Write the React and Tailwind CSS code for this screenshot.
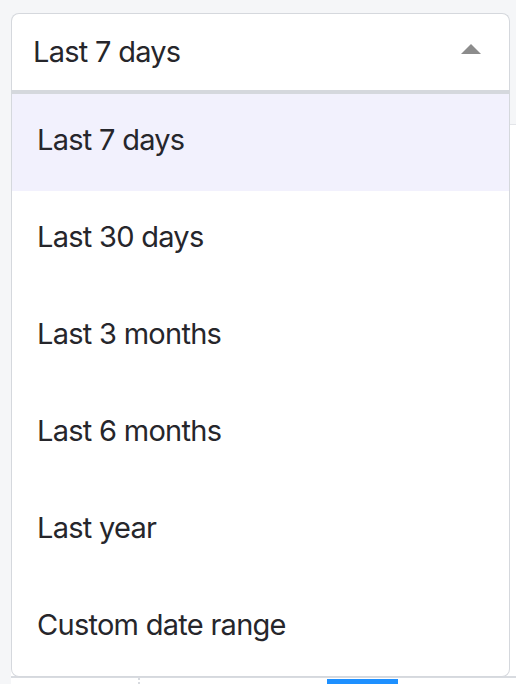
const options = [
  'Last 7 days',
  'Last 30 days',
  'Last 3 months',
  'Last 6 months',
  'Last year',
  'Custom date range',
]

export default function App() {
  const selected = 'Last 7 days'

  return (
    <div
      className="flex h-[684px] w-[516px] flex-col overflow-hidden bg-[#f5f6f8] text-[#26262b]"
      style={{ fontFamily: 'Inter, "Noto Sans", sans-serif' }}
    >
      {/* select */}
      <div className="relative z-10 ml-[11px] mt-[13px] w-[499px]">
        <button className="flex h-[78px] w-full items-center justify-between rounded-t-lg border-x-[1.5px] border-t-[1.5px] border-[#d5d8dd] bg-white pl-[21px] pr-[28px] text-[29px] tracking-[-0.025em]">
          <span className="pb-[2px]">{selected}</span>
          <svg width="20" height="10" viewBox="0 0 20 10" className="mb-[8px]">
            <polygon points="10,0 20,10 0,10" fill="#8c8c8c" />
          </svg>
        </button>

        {/* menu */}
        <ul className="absolute left-0 top-[77px] w-full overflow-hidden rounded-b-lg border-x-[1.5px] border-b-[1.5px] border-t-[4px] border-[#d5d8dd] bg-white">
          {options.map((o) => (
            <li
              key={o}
              className={`flex h-[97px] items-center pb-[6px] pl-[25px] text-[29px] tracking-[-0.025em] ${
                o === selected ? 'bg-[#f2f1fd]' : ''
              }`}
            >
              {o}
            </li>
          ))}
        </ul>
      </div>

      {/* page content behind the menu */}
      <div className="ml-[11px] mt-[33px] flex flex-1 flex-col border-t border-[#e3e5e9] bg-white">
        <div className="h-[551px]" />
        <div className="flex flex-1 border-t-2 border-[#d8dbe0]">
          <div className="w-[127px]" />
          <div className="w-[189px] border-l-2 border-dotted border-[#d8dbe0]" />
          <div className="mt-[1px] w-[71px] bg-[#1e90ff]" />
        </div>
      </div>
    </div>
  )
}
